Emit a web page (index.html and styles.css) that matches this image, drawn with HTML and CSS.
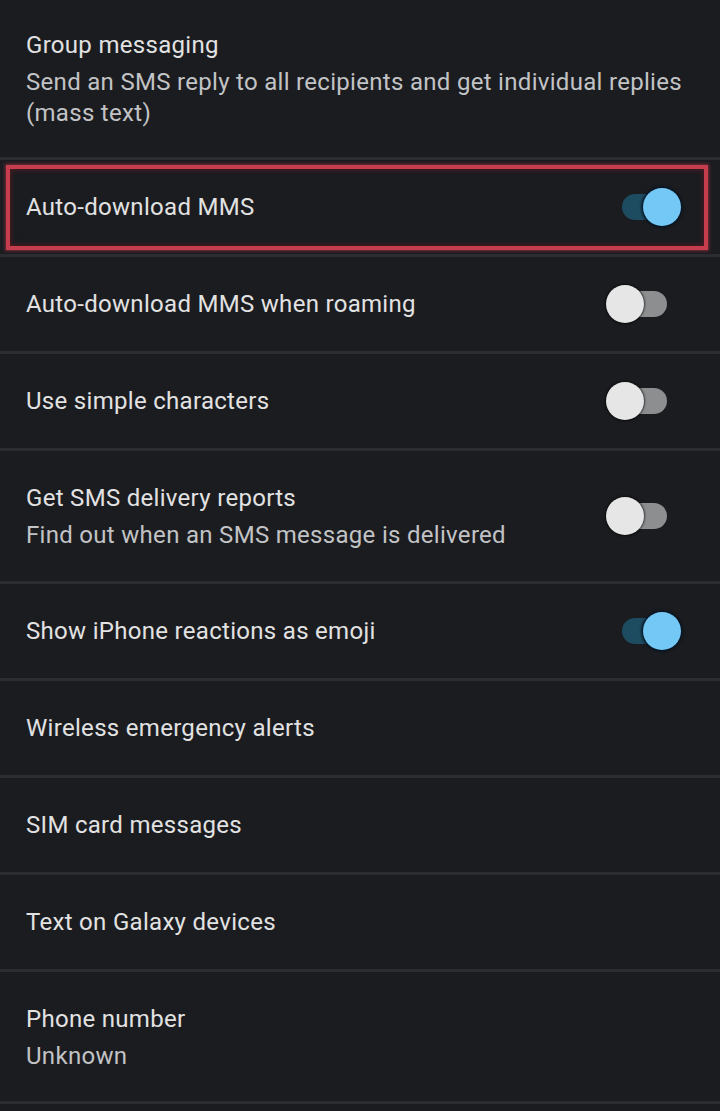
FILE: index.html
```html
<!DOCTYPE html>
<html lang="en">
<head>
<meta charset="utf-8">
<title>Messages settings</title>
<link rel="stylesheet" href="styles.css">
</head>
<body>
<main class="list">
  <div class="row first">
    <div class="text">
      <div class="title">Group messaging</div>
      <div class="sub">Send an SMS reply to all recipients and get individual replies (mass text)</div>
    </div>
  </div>
  <div class="row highlighted">
    <div class="text"><div class="title">Auto-download MMS</div></div>
    <div class="toggle on"><span class="track"></span><span class="thumb"></span></div>
    <div class="highlight"></div>
  </div>
  <div class="row">
    <div class="text"><div class="title">Auto-download MMS when roaming</div></div>
    <div class="toggle off"><span class="track"></span><span class="thumb"></span></div>
  </div>
  <div class="row">
    <div class="text"><div class="title">Use simple characters</div></div>
    <div class="toggle off"><span class="track"></span><span class="thumb"></span></div>
  </div>
  <div class="row two">
    <div class="text">
      <div class="title">Get SMS delivery reports</div>
      <div class="sub">Find out when an SMS message is delivered</div>
    </div>
    <div class="toggle off"><span class="track"></span><span class="thumb"></span></div>
  </div>
  <div class="row">
    <div class="text"><div class="title">Show iPhone reactions as emoji</div></div>
    <div class="toggle on"><span class="track"></span><span class="thumb"></span></div>
  </div>
  <div class="row">
    <div class="text"><div class="title">Wireless emergency alerts</div></div>
  </div>
  <div class="row">
    <div class="text"><div class="title">SIM card messages</div></div>
  </div>
  <div class="row">
    <div class="text"><div class="title">Text on Galaxy devices</div></div>
  </div>
  <div class="row">
    <div class="text">
      <div class="title">Phone number</div>
      <div class="sub">Unknown</div>
    </div>
  </div>
</main>
</body>
</html>
```

FILE: styles.css
```css
html, body {
  margin: 0;
  padding: 0;
  background: #1b1c20;
}
body {
  font-family: Roboto, "Noto Sans", "Liberation Sans", sans-serif;
  color: #e2e2e2;
  height: 1111px;
  overflow: hidden;
}
.list {
  display: flex;
  flex-direction: column;
}
.row {
  position: relative;
  display: flex;
  align-items: center;
  min-height: 36px;
  padding: 29px 38px 29px 26px;
  border-bottom: 3px solid #2a2d32;
  gap: 16px;
}
.row.first {
  padding-top: 27px;
  padding-bottom: 28px;
  padding-right: 20px;
}
.row.two {
  padding-bottom: 30px;
}
.text {
  flex: 1;
  min-width: 0;
}
.title {
  font-size: 24px;
  letter-spacing: 0.3px;
  line-height: 36px;
  color: #e2e2e2;
}
.sub {
  font-size: 24px;
  letter-spacing: 0.3px;
  line-height: 31px;
  margin-top: 4px;
  color: #c2c3c5;
}
.toggle {
  position: relative;
  width: 76px;
  height: 36px;
  flex: none;
}
.toggle .track {
  position: absolute;
  top: 5px;
  height: 26px;
  border-radius: 13px;
}
.toggle .thumb {
  position: absolute;
  top: -1px;
  width: 38px;
  height: 38px;
  border-radius: 50%;
}
.toggle.off .track {
  left: 11px;
  width: 50px;
  background: #8d8e90;
}
.toggle.off .thumb {
  left: 0;
  background: #e6e6e6;
  box-shadow: 0 0 2px 1px rgba(0, 0, 0, 0.6);
}
.toggle.on .track {
  left: 16px;
  width: 54px;
  background: #1d4b60;
}
.toggle.on .thumb {
  left: 37px;
  background: #74c8f6;
  box-shadow: 0 0 2px 2px rgba(5, 20, 35, 0.8);
}
.highlight {
  position: absolute;
  left: 6px;
  right: 12px;
  top: 5px;
  bottom: 4px;
  border: 4px solid #c63d4d;
  box-shadow: 0 0 3px 1px rgba(200, 60, 78, 0.55), inset 0 0 5px 1px rgba(120, 25, 35, 0.55);
  pointer-events: none;
}
```
